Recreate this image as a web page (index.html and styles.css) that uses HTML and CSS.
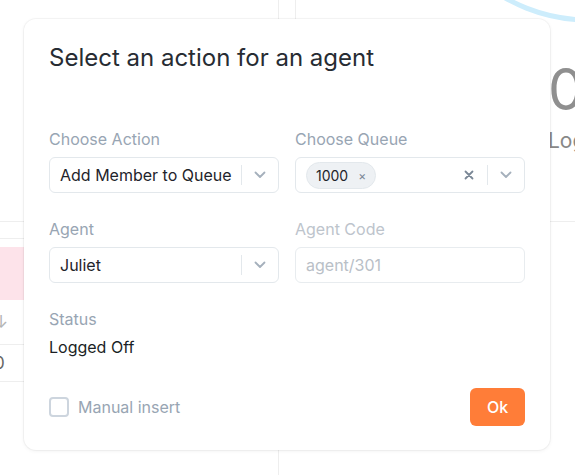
FILE: index.html
```html
<!DOCTYPE html>
<html lang="en">
	<head>
		<meta charset="utf-8"/>
		<title>Agents</title>
		<link rel="stylesheet" href="styles.css">
	</head>
	<body>
		<!-- Dashboard behind the dialog -->
		<div class="dashboard">
			<aside class="list-pane">
				<div class="table">
					<div class="table-head"></div>
					<div class="table-row alert"></div>
					<div class="table-row"><span class="cell">↓</span></div>
					<div class="table-row short"><span class="cell">0</span></div>
				</div>
			</aside>
			<section class="stats-pane">
				<svg class="ring" width="280" height="40" viewBox="0 0 280 40">
					<circle cx="294" cy="-150" r="170" fill="none" stroke="#cdedfc" stroke-width="5"/>
				</svg>
				<div class="stat">
					<div class="stat-value">0</div>
					<div class="stat-label">Logged In</div>
				</div>
			</section>
		</div>

		<!-- Agent action dialog -->
		<div class="modal">
			<h2 class="modal-title">Select an action for an agent</h2>
			<div class="form-grid">
				<div class="field">
					<label class="field-label">Choose Action</label>
					<div class="select">
						<span class="select-value">Add Member to Queue</span>
						<span class="select-sep"></span>
						<span class="select-arrow">
							<svg width="12" height="8" viewBox="0 0 12 8"><path d="M1.5 1.5 6 6l4.5-4.5" fill="none" stroke="#a5b0bc" stroke-width="1.8" stroke-linecap="round" stroke-linejoin="round"/></svg>
						</span>
					</div>
				</div>
				<div class="field">
					<label class="field-label">Choose Queue</label>
					<div class="select">
						<span class="select-value">
							<span class="tag">1000 <span class="tag-close">×</span></span>
						</span>
						<span class="select-clear">
							<svg width="10" height="10" viewBox="0 0 10 10"><path d="M1.5 1.5l7 7M8.5 1.5l-7 7" stroke="#7a8796" stroke-width="1.8" stroke-linecap="round"/></svg>
						</span>
						<span class="select-sep"></span>
						<span class="select-arrow">
							<svg width="12" height="8" viewBox="0 0 12 8"><path d="M1.5 1.5 6 6l4.5-4.5" fill="none" stroke="#a5b0bc" stroke-width="1.8" stroke-linecap="round" stroke-linejoin="round"/></svg>
						</span>
					</div>
				</div>
				<div class="field">
					<label class="field-label">Agent</label>
					<div class="select">
						<span class="select-value">Juliet</span>
						<span class="select-sep"></span>
						<span class="select-arrow">
							<svg width="12" height="8" viewBox="0 0 12 8"><path d="M1.5 1.5 6 6l4.5-4.5" fill="none" stroke="#a5b0bc" stroke-width="1.8" stroke-linecap="round" stroke-linejoin="round"/></svg>
						</span>
					</div>
				</div>
				<div class="field disabled">
					<label class="field-label">Agent Code</label>
					<input class="text-input" type="text" placeholder="agent/301" disabled/>
				</div>
				<div class="field">
					<label class="field-label status">Status</label>
					<div class="status-value">Logged Off</div>
				</div>
			</div>
			<div class="modal-footer">
				<label class="checkbox"><span class="checkbox-box"></span>Manual insert</label>
				<button class="btn-ok" type="button">Ok</button>
			</div>
		</div>
	</body>
</html>
```

FILE: styles.css
```css
/*Basic body design*/
body {
	font-family: Inter, "Noto Sans", sans-serif;
	position: relative;
	background: #fff;
	overflow: hidden;
	height: 475px;
	margin: 0;
}

/*Dashboard behind the dialog*/
.dashboard {
	grid-template-columns: 279px 1fr;
	display: grid;
	height: 475px;
}

.list-pane {
	border-right: 1px solid #eeeeee;
	overflow: hidden;
}

.table {
	border-top: 1px solid #eeeeee;
	margin-top: 221px;
}

.table-head {
	border-bottom: 1px solid #eeeeee;
	height: 16px;
}

.table-row {
	border-bottom: 1px solid #eeeeee;
	align-items: center;
	display: flex;
	height: 44px;
	color: #b5b5b5;
	font-size: 17px;
}

.table-row.alert {
	background: #fde3ea;
	border-bottom: none;
	margin-top: 8px;
	height: 53px;
}

.table-row.short {
	height: 36px;
	color: #666;
}

.table-row .cell {
	margin-left: -6px;
}

.stats-pane {
	border-bottom: 1px solid #eeeeee;
	border-left: 1px solid #eeeeee;
	position: relative;
	margin-left: 16px;
	overflow: hidden;
	height: 221px;
}

.ring {
	position: absolute;
	right: 0;
	top: 0;
}

.stat {
	padding: 62px 0 0 252px;
	white-space: nowrap;
}

.stat-value {
	line-height: 56px;
	font-size: 57px;
	color: #8f8f8f;
}

.stat-label {
	margin-top: 10px;
	font-size: 21px;
	color: #888;
}

/*Dialog*/
.modal {
	box-shadow: 0 0 0 1px rgba(0, 0, 0, 0.035), 0 1px 4px rgba(0, 0, 0, 0.06);
	box-sizing: border-box;
	padding: 25px 25px 24px;
	flex-direction: column;
	border-radius: 12px;
	background: #fff;
	position: absolute;
	display: flex;
	height: 431px;
	width: 526px;
	left: 24px;
	top: 19px;
}

.modal-title {
	line-height: 28px;
	font-weight: 400;
	font-size: 24px;
	color: #272c33;
	margin: 0 0 55px;
}

.form-grid {
	grid-template-columns: minmax(0, 1fr) minmax(0, 1fr);
	column-gap: 16px;
	row-gap: 24px;
	display: grid;
}

.field {
	flex-direction: column;
	display: flex;
}

.field-label {
	margin-bottom: 6px;
	line-height: 24px;
	font-size: 16px;
	color: #98a5b3;
}

.field-label.status {
	margin-bottom: 4px;
}

.field.disabled .field-label {
	color: #bdc4cc;
}

/*Select boxes*/
.select {
	border: 1px solid #e3e8ec;
	box-sizing: border-box;
	align-items: center;
	border-radius: 6px;
	display: flex;
	height: 36px;
}

.select-value {
	padding-left: 10px;
	align-items: center;
	white-space: nowrap;
	font-size: 16px;
	color: #1f242b;
	display: flex;
	flex: 1;
}

.select-sep {
	background: #e3e8ec;
	height: 20px;
	width: 1px;
}

.select-arrow {
	justify-content: center;
	display: flex;
	width: 36px;
}

.select-clear {
	justify-content: center;
	display: flex;
	width: 36px;
}

.tag {
	border: 1px solid #e3e8ec;
	background: #eef1f4;
	border-radius: 14px;
	align-items: center;
	padding: 0 9px 0 9px;
	box-sizing: border-box;
	display: flex;
	font-size: 14px;
	color: #1f242b;
	height: 27px;
	gap: 10px;
}

.tag-close {
	font-size: 12px;
	color: #7a8796;
}

.text-input {
	border: 1px solid #e8ecef;
	box-sizing: border-box;
	font-family: inherit;
	border-radius: 6px;
	padding: 0 10px;
	background: #fff;
	font-size: 16px;
	outline: none;
	height: 36px;
}

.text-input::placeholder {
	color: #b9c0c7;
}

.status-value {
	line-height: 24px;
	font-size: 16px;
	color: #1b1f25;
}

/*Dialog footer*/
.modal-footer {
	justify-content: space-between;
	align-items: center;
	margin-top: auto;
	display: flex;
}

.checkbox {
	align-items: center;
	font-size: 16px;
	color: #98a5b3;
	display: flex;
	gap: 9px;
}

.checkbox-box {
	border: 2px solid #cdd5de;
	box-sizing: border-box;
	border-radius: 4px;
	height: 20px;
	width: 20px;
}

.btn-ok {
	font-family: inherit;
	background: #ff7d38;
	border-radius: 6px;
	font-weight: 500;
	font-size: 16px;
	border: none;
	color: #fff;
	height: 38px;
	width: 55px;
}
```
